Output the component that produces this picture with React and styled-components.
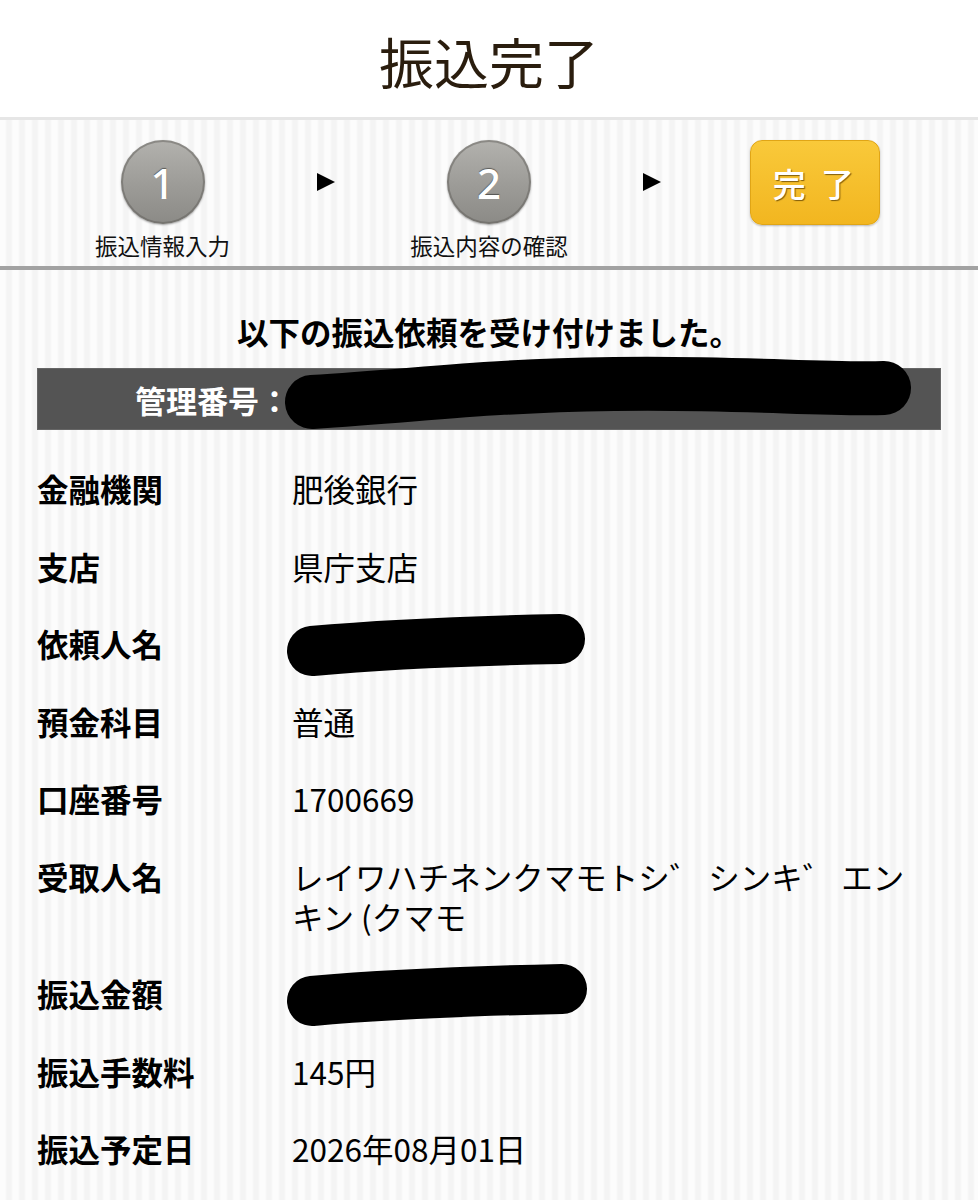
import React from "react";
import styled, { createGlobalStyle } from "styled-components";

const GlobalStyle = createGlobalStyle`
  html, body {
    margin: 0;
    padding: 0;
    background: #fff;
  }
  body {
    font-family: "Noto Sans CJK JP", "Noto Sans", sans-serif;
    color: #000;
  }
`;

const Page = styled.div`
  width: 978px;
  min-height: 1200px;
  background: repeating-linear-gradient(
    90deg,
    #fcfcfc 0px,
    #fcfcfc 5px,
    #f4f4f4 7px,
    #f4f4f4 11px,
    #fcfcfc 13px
  );
`;

const Header = styled.header`
  height: 117px;
  background: #fff;
  border-bottom: 3px solid #e6e6e6;
  display: flex;
  align-items: center;
  justify-content: center;
`;

const Title = styled.h1`
  margin: 0;
  font-size: 55px;
  font-weight: 400;
  color: #2a1d0e;
  line-height: 1;
  padding-top: 4px;
`;

const Steps = styled.div`
  box-sizing: border-box;
  height: 150px;
  padding: 20px 81px 0;
  display: grid;
  grid-template-columns: repeat(5, 1fr);
  align-items: start;
  border-bottom: 4px solid #a2a2a2;
`;

const Step = styled.div`
  display: flex;
  flex-direction: column;
  align-items: center;
  gap: 7px;
`;

const Circle = styled.div`
  width: 84px;
  height: 84px;
  border-radius: 50%;
  background: linear-gradient(180deg, #b3b2ae 0%, #9c9b97 55%, #8b8a86 100%);
  box-shadow: inset 0 0 0 2px rgba(90, 88, 84, 0.45), 0 1px 2px rgba(0, 0, 0, 0.35);
  display: flex;
  align-items: center;
  justify-content: center;
  color: #fff;
  font-family: "Noto Sans", "Liberation Sans", sans-serif;
  font-size: 42px;
  font-weight: 500;
  text-shadow: 0 -1px 1px rgba(0, 0, 0, 0.45);
`;

const StepLabel = styled.div`
  font-size: 22.5px;
  line-height: 28px;
  color: #111;
  white-space: nowrap;
`;

const ArrowCell = styled.div`
  height: 84px;
  display: flex;
  align-items: center;
  justify-content: center;
`;

const Arrow = styled.span`
  width: 0;
  height: 0;
  border-top: 9.5px solid transparent;
  border-bottom: 9.5px solid transparent;
  border-left: 18px solid #000;
`;

const DoneBadge = styled.div`
  width: 130px;
  height: 85px;
  box-sizing: border-box;
  border-radius: 12px;
  border: 1px solid #e0a516;
  background: linear-gradient(180deg, #f9c93a 0%, #f2b620 100%);
  box-shadow: 0 1px 2px rgba(0, 0, 0, 0.25);
  display: flex;
  align-items: center;
  justify-content: center;
  color: #fff;
  font-size: 33px;
  font-weight: 500;
  letter-spacing: 4px;
  text-shadow: 1px 1px 1px rgba(90, 60, 0, 0.75);
`;

const Content = styled.main`
  padding: 0 37px;
`;

const Message = styled.p`
  margin: 41px 0 17px;
  text-align: center;
  font-size: 31.5px;
  line-height: 40px;
  font-weight: 700;
`;

const NumberBar = styled.div`
  position: relative;
  height: 62px;
  box-sizing: border-box;
  background: #545454;
  border: 1px solid #666;
  display: flex;
  align-items: center;
  padding-left: 97px;
  color: #fff;
  font-size: 31px;
  font-weight: 700;
`;

const BarBlot = styled.svg`
  position: absolute;
  left: 246px;
  top: -9px;
  overflow: visible;
`;

const Rows = styled.dl`
  margin: 19px 0 0;
`;

const Row = styled.div`
  display: grid;
  grid-template-columns: 255px 628px;
  padding: 19px 0 18.5px;
  font-size: 31.5px;
  line-height: 40px;
`;

const Label = styled.dt`
  font-weight: 700;
  margin: 0;
`;

const Value = styled.dd`
  margin: 0;
  font-weight: 400;
`;

const Blot = styled.svg`
  display: block;
  overflow: visible;
`;

const blot = (w, tilt) => (
  <Blot width={w} height={40} viewBox={`0 0 ${w} 40`}>
    <path
      d={`M 20 ${24 + tilt} C ${w * 0.3} ${18 + tilt}, ${w * 0.6} 18, ${w - 22} 16`}
      stroke="#000"
      strokeWidth="50"
      strokeLinecap="round"
      fill="none"
    />
  </Blot>
);

const rows = [
  { label: "金融機関", value: "肥後銀行" },
  { label: "支店", value: "県庁支店" },
  { label: "依頼人名", blot: 290 },
  { label: "預金科目", value: "普通" },
  { label: "口座番号", value: "1700669" },
  { label: "受取人名", value: "レイワハチネンクマモトシ゛ シンキ゛ エンキン (クマモ" },
  { label: "振込金額", blot: 292 },
  { label: "振込手数料", value: "145円" },
  { label: "振込予定日", value: "2026年08月01日" },
];

export default function App() {
  return (
    <>
      <GlobalStyle />
      <Page>
        <Header>
          <Title>振込完了</Title>
        </Header>
        <Steps>
          <Step>
            <Circle>1</Circle>
            <StepLabel>振込情報入力</StepLabel>
          </Step>
          <ArrowCell>
            <Arrow />
          </ArrowCell>
          <Step>
            <Circle>2</Circle>
            <StepLabel>振込内容の確認</StepLabel>
          </Step>
          <ArrowCell>
            <Arrow />
          </ArrowCell>
          <Step>
            <DoneBadge>完 了</DoneBadge>
          </Step>
        </Steps>
        <Content>
          <Message>以下の振込依頼を受け付けました。</Message>
          <NumberBar>
            管理番号：
            <BarBlot width="630" height="62" viewBox="0 0 630 62">
              <path
                d="M 28 42 C 150 34, 200 26, 330 24 C 450 22, 540 30, 600 28"
                stroke="#000"
                strokeWidth="54"
                strokeLinecap="round"
                fill="none"
              />
            </BarBlot>
          </NumberBar>
          <Rows>
            {rows.map((r) => (
              <Row key={r.label}>
                <Label>{r.label}</Label>
                <Value>{r.blot ? blot(r.blot, 4) : r.value}</Value>
              </Row>
            ))}
          </Rows>
        </Content>
      </Page>
    </>
  );
}
